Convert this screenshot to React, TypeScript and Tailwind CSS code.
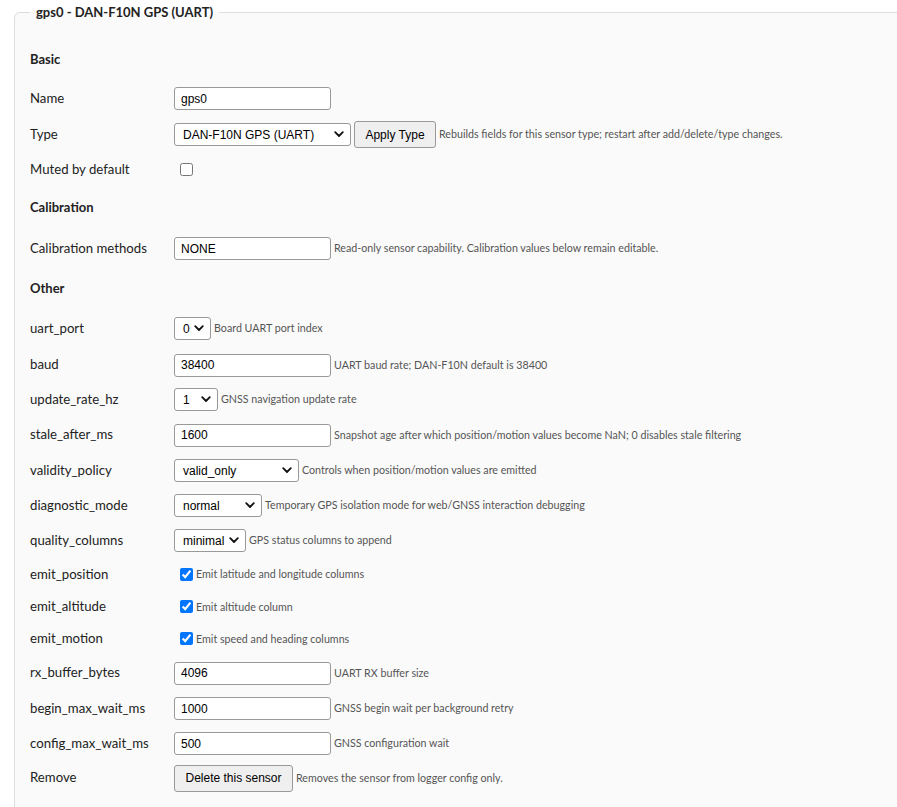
import React from "react";

const Chevron = () => (
  <svg width="10" height="7" viewBox="0 0 10 7" className="shrink-0">
    <path d="M1.2 1.2 L5 5 L8.8 1.2" fill="none" stroke="#111" strokeWidth="1.8" strokeLinecap="round" strokeLinejoin="round" />
  </svg>
);

function Select({ value, w }: { value: string; w: string }) {
  return (
    <div
      className={`${w} h-[23px] flex items-center justify-between pl-[8px] pr-[6px] bg-white border border-[#999] rounded-[3px] text-[12px] font-['Liberation_Sans',Arial,sans-serif] text-black`}
    >
      <span>{value}</span>
      <Chevron />
    </div>
  );
}

function TextInput({ value }: { value: string }) {
  return (
    <input
      readOnly
      defaultValue={value}
      className="w-[157px] h-[23px] px-[6px] bg-white border border-[#999] rounded-[3px] text-[12px] font-['Liberation_Sans',Arial,sans-serif] text-black outline-none"
    />
  );
}

function Button({ children, w }: { children: React.ReactNode; w: string }) {
  return (
    <button
      className={`${w} h-[27px] bg-[#efefef] border border-[#999] rounded-[3px] text-[12px] font-['Liberation_Sans',Arial,sans-serif] text-black`}
    >
      {children}
    </button>
  );
}

function Help({ children }: { children: React.ReactNode }) {
  return <span className="text-[10.7px] text-[#555] whitespace-nowrap">{children}</span>;
}

function Check({ checked, label }: { checked: boolean; label?: string }) {
  return (
    <div className="flex items-center">
      <input type="checkbox" defaultChecked={checked} className="ml-[6px] mr-[3px] w-[13px] h-[13px]" />
      {label ? <Help>{label}</Help> : null}
    </div>
  );
}

function Row({ h, label, children }: { h: string; label: string; children: React.ReactNode }) {
  return (
    <div className={`flex items-center ${h}`}>
      <div className="w-[144px] shrink-0 text-[13.2px] text-[#222]">{label}</div>
      <div className="flex items-center gap-[3px]">{children}</div>
    </div>
  );
}

function Heading({ h, children }: { h: string; children: React.ReactNode }) {
  return <div className={`flex items-center ${h} text-[13px] font-bold text-[#222]`}>{children}</div>;
}

export default function App() {
  return (
    <div className="h-[807px] overflow-hidden bg-white pl-[14px] pt-[2px] font-['Lato','Noto_Sans',sans-serif]">
      <fieldset className="w-[950px] min-h-[900px] border border-[#ddd] rounded-[6px] bg-[#fafafa] px-[15px]">
        <legend className="px-[6px] text-[13px] font-bold leading-[20px] text-[#222]">gps0 - DAN-F10N GPS (UART)</legend>
        <div className="pt-[18px] flex flex-col">
          <Heading h="h-[40px]">Basic</Heading>
          <Row h="h-[37px]" label="Name">
            <TextInput value="gps0" />
          </Row>
          <Row h="h-[35px]" label="Type">
            <Select w="w-[177px]" value="DAN-F10N GPS (UART)" />
            <Button w="w-[82px]">Apply Type</Button>
            <Help>Rebuilds fields for this sensor type; restart after add/delete/type changes.</Help>
          </Row>
          <Row h="h-[35px]" label="Muted by default">
            <Check checked={false} />
          </Row>
          <Heading h="h-[42px]">Calibration</Heading>
          <Row h="h-[39px]" label="Calibration methods">
            <TextInput value="NONE" />
            <Help>Read-only sensor capability. Calibration values below remain editable.</Help>
          </Row>
          <Heading h="h-[41px]">Other</Heading>
          <Row h="h-[39px]" label="uart_port">
            <Select w="w-[37px]" value="0" />
            <Help>Board UART port index</Help>
          </Row>
          <Row h="h-[34px]" label="baud">
            <TextInput value="38400" />
            <Help>UART baud rate; DAN-F10N default is 38400</Help>
          </Row>
          <Row h="h-[35px]" label="update_rate_hz">
            <Select w="w-[44px]" value="1" />
            <Help>GNSS navigation update rate</Help>
          </Row>
          <Row h="h-[36px]" label="stale_after_ms">
            <TextInput value="1600" />
            <Help>Snapshot age after which position/motion values become NaN; 0 disables stale filtering</Help>
          </Row>
          <Row h="h-[35px]" label="validity_policy">
            <Select w="w-[125px]" value="valid_only" />
            <Help>Controls when position/motion values are emitted</Help>
          </Row>
          <Row h="h-[35px]" label="diagnostic_mode">
            <Select w="w-[88px]" value="normal" />
            <Help>Temporary GPS isolation mode for web/GNSS interaction debugging</Help>
          </Row>
          <Row h="h-[35px]" label="quality_columns">
            <Select w="w-[72px]" value="minimal" />
            <Help>GPS status columns to append</Help>
          </Row>
          <Row h="h-[33px]" label="emit_position">
            <Check checked label="Emit latitude and longitude columns" />
          </Row>
          <Row h="h-[32px]" label="emit_altitude">
            <Check checked label="Emit altitude column" />
          </Row>
          <Row h="h-[32px]" label="emit_motion">
            <Check checked label="Emit speed and heading columns" />
          </Row>
          <Row h="h-[36px]" label="rx_buffer_bytes">
            <TextInput value="4096" />
            <Help>UART RX buffer size</Help>
          </Row>
          <Row h="h-[35px]" label="begin_max_wait_ms">
            <TextInput value="1000" />
            <Help>GNSS begin wait per background retry</Help>
          </Row>
          <Row h="h-[35px]" label="config_max_wait_ms">
            <TextInput value="500" />
            <Help>GNSS configuration wait</Help>
          </Row>
          <Row h="h-[34px]" label="Remove">
            <Button w="w-[119px]">Delete this sensor</Button>
            <Help>Removes the sensor from logger config only.</Help>
          </Row>
        </div>
      </fieldset>
    </div>
  );
}
